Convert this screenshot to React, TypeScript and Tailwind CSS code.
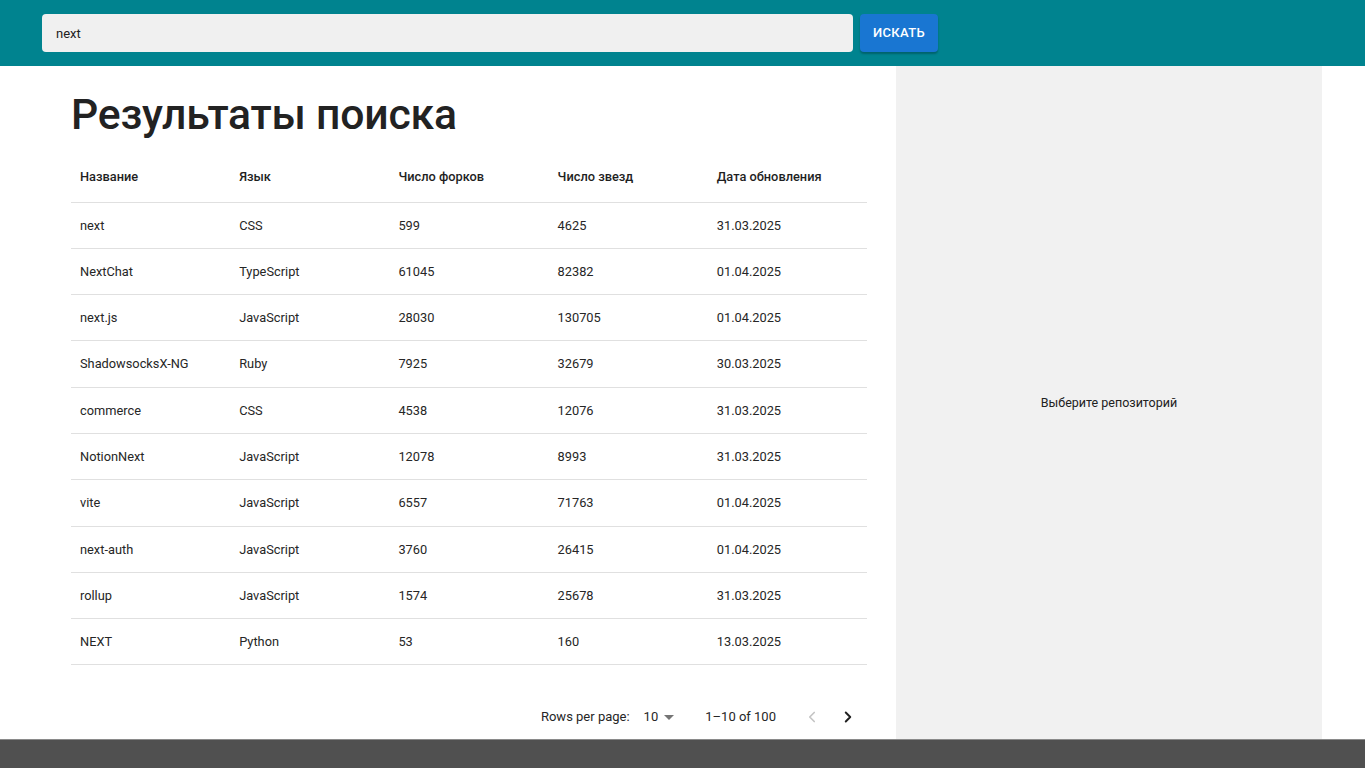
import { ChevronLeft, ChevronRight } from "lucide-react";

const rows = [
  ["next", "CSS", "599", "4625", "31.03.2025"],
  ["NextChat", "TypeScript", "61045", "82382", "01.04.2025"],
  ["next.js", "JavaScript", "28030", "130705", "01.04.2025"],
  ["ShadowsocksX-NG", "Ruby", "7925", "32679", "30.03.2025"],
  ["commerce", "CSS", "4538", "12076", "31.03.2025"],
  ["NotionNext", "JavaScript", "12078", "8993", "31.03.2025"],
  ["vite", "JavaScript", "6557", "71763", "01.04.2025"],
  ["next-auth", "JavaScript", "3760", "26415", "01.04.2025"],
  ["rollup", "JavaScript", "1574", "25678", "31.03.2025"],
  ["NEXT", "Python", "53", "160", "13.03.2025"],
];

const headers = ["Название", "Язык", "Число форков", "Число звезд", "Дата обновления"];

const App = () => {
  return (
    <div className="flex h-[768px] flex-col font-['Roboto',sans-serif] text-[#212121]">
      <header className="flex h-[66px] shrink-0 items-center gap-[7px] bg-[#00838f] px-[42px]">
        <input
          className="h-[38px] w-[811px] rounded-[4px] bg-[#f0f0f0] px-[14px] text-[13px] text-[#212121] outline-none"
          type="text"
          defaultValue="next"
        />
        <button
          type="button"
          className="h-[38px] w-[78px] rounded-[4px] bg-[#1976d2] text-[13px] font-medium tracking-[0.3px] text-white shadow-[0_2px_2px_rgba(0,0,0,0.25)]"
        >
          ИСКАТЬ
        </button>
      </header>

      <main className="flex min-h-0 grow">
        <section className="flex w-[896px] flex-col pl-[71px] pr-[29px]">
          <h1 className="mt-[20px] text-[42.7px] leading-[56px] font-medium tracking-[-0.2px] text-[#222]">
            Результаты поиска
          </h1>
          <table className="mt-[10px] w-full table-fixed border-collapse text-[12.8px] text-[#262626]">
            <thead>
              <tr className="h-[50px] border-b border-[#e0e0e0]">
                {headers.map((h) => (
                  <th key={h} className="pl-[9px] text-left font-medium text-[#1f1f1f]">
                    {h}
                  </th>
                ))}
              </tr>
            </thead>
            <tbody>
              {rows.map((r) => (
                <tr key={r[0]} className="h-[46.3px] border-b border-[#e0e0e0]">
                  {r.map((c, i) => (
                    <td key={i} className="pl-[9px]">
                      {c}
                    </td>
                  ))}
                </tr>
              ))}
            </tbody>
          </table>
          <div className="mt-[42px] flex items-center justify-end pr-[10px] text-[13px] text-[#262626]">
            <span>Rows per page:</span>
            <span className="ml-[14px]">10</span>
            <svg className="ml-[6px]" width="10" height="5" viewBox="0 0 10 5">
              <path d="M0 0 L10 0 L5 5 Z" fill="#757575" />
            </svg>
            <span className="ml-[31px]">1–10 of 100</span>
            <ChevronLeft className="ml-[27px]" size={18} strokeWidth={2.2} color="#c4c4c4" />
            <ChevronRight className="ml-[18px]" size={18} strokeWidth={2.6} color="#212121" />
          </div>
        </section>
        <aside className="flex w-[426px] items-center justify-center bg-[#f1f1f1] pt-[2px] text-[12.5px] text-[#212121]">
          Выберите репозиторий
        </aside>
        <div className="grow bg-white" />
      </main>

      <footer className="h-[29px] shrink-0 border-t border-[#8a8a8a] bg-[#505050]" />
    </div>
  );
};

export default App;
